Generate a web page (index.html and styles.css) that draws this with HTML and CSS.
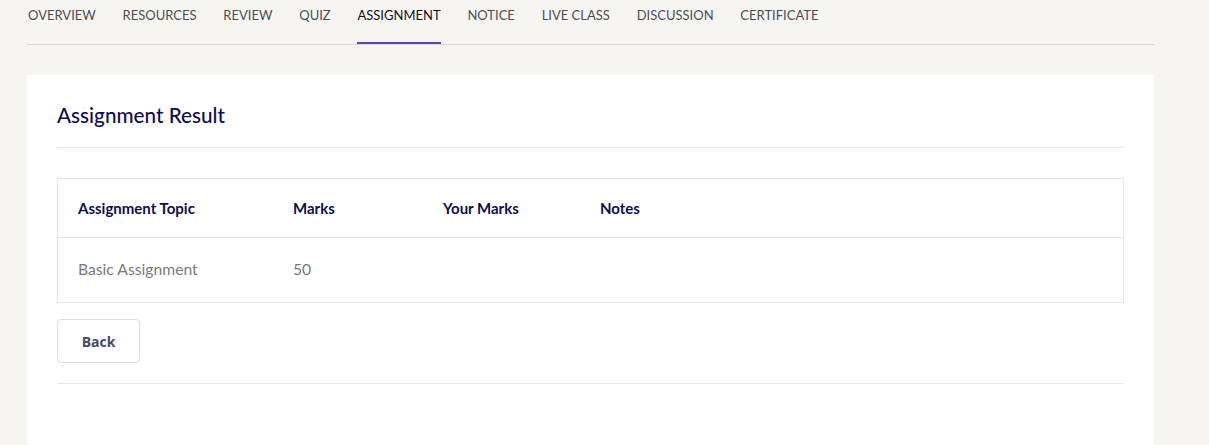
FILE: index.html
```html
<!DOCTYPE html>
<html>
<head>
<meta charset="utf-8">
<link rel="stylesheet" href="styles.css">
</head>
<body>
<div class="page">
  <nav class="tabs">
    <a class="tab">OVERVIEW</a>
    <a class="tab">RESOURCES</a>
    <a class="tab">REVIEW</a>
    <a class="tab">QUIZ</a>
    <a class="tab active">ASSIGNMENT</a>
    <a class="tab">NOTICE</a>
    <a class="tab">LIVE CLASS</a>
    <a class="tab">DISCUSSION</a>
    <a class="tab">CERTIFICATE</a>
  </nav>
  <section class="card">
    <h2 class="title">Assignment Result</h2>
    <div class="table">
      <div class="row head">
        <div class="cell">Assignment Topic</div>
        <div class="cell">Marks</div>
        <div class="cell">Your Marks</div>
        <div class="cell">Notes</div>
      </div>
      <div class="row body">
        <div class="cell">Basic Assignment</div>
        <div class="cell">50</div>
        <div class="cell"></div>
        <div class="cell"></div>
      </div>
    </div>
    <div class="actions">
      <button class="btn">Back</button>
    </div>
  </section>
</div>
</body>
</html>
```
FILE: styles.css
```css
html, body {
  margin: 0;
  padding: 0;
  background: #f6f5f1;
  font-family: "Lato", "Open Sans", sans-serif;
}
.page {
  width: 1127px;
  margin-left: 27px;
}
.tabs {
  display: flex;
  gap: 26.8px;
  height: 44px;
  border-bottom: 1px solid #d9d8d5;
  padding-left: 1px;
}
.tab {
  display: flex;
  align-items: center;
  height: 44px;
  padding-bottom: 13px;
  box-sizing: border-box;
  font-size: 13px;
  color: #4d4d55;
  letter-spacing: 0;
  border-bottom: 2px solid transparent;
}
.tab.active {
  color: #111118;
  border-bottom-color: #5a47b5;
}
.card {
  margin-top: 30px;
  background: #fff;
  padding: 0 30px 60px 30px;
  height: 370px;
  box-sizing: border-box;
}
.title {
  margin: 0;
  padding: 28px 0 20px 0;
  font-size: 20.7px;
  font-weight: 500;
  color: #0e0e4b;
  border-bottom: 1px solid #e6e6e6;
  line-height: 24px;
}
.table {
  margin-top: 30px;
  border: 1px solid #e6e6e6;
}
.row {
  display: grid;
  grid-template-columns: 215px 150px 157px 1fr;
  align-items: center;
}
.row.head {
  height: 58px;
  border-bottom: 1px solid #e6e6e6;
}
.row.body {
  height: 64px;
}
.cell {
  padding-left: 20px;
}
.head .cell {
  font-size: 15px;
  font-weight: 700;
  color: #0e0e4b;
}
.body .cell {
  font-size: 15.7px;
  color: #7a7a80;
  padding-bottom: 2px;
}
.actions {
  padding: 16px 0 20px 0;
  border-bottom: 1px solid #e6e6e6;
}
.btn {
  width: 83px;
  height: 44px;
  border: 1px solid #dcdcdc;
  border-radius: 4px;
  background: #fff;
  font-family: "Open Sans", sans-serif;
  font-size: 14px;
  font-weight: 700;
  color: #454a5c;
}
```
